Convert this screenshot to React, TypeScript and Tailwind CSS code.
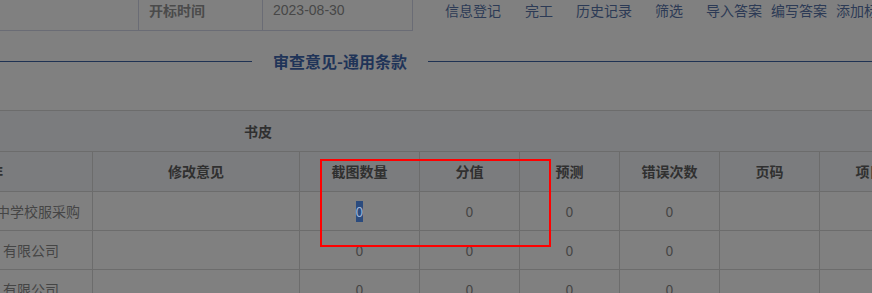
import React from "react";

const cols = [
  { w: "w-[93px]", label: "非", align: "left" },
  { w: "w-[207px]", label: "修改意见" },
  { w: "w-[120px]", label: "截图数量" },
  { w: "w-[100px]", label: "分值" },
  { w: "w-[100px]", label: "预测" },
  { w: "w-[100px]", label: "错误次数" },
  { w: "w-[100px]", label: "页码" },
  { w: "w-[100px]", label: "项目" },
];

const rows = [
  { name: "中学校服采购", off: "ml-[-4px]" },
  { name: "有限公司", off: "ml-[3px]" },
  { name: "有限公司", off: "ml-[3px]" },
];

function FirstCell({ children }: { children: React.ReactNode }) {
  return (
    <div className="w-[93px] shrink-0 h-full border-r border-[#6c6c6c] overflow-hidden flex items-center whitespace-nowrap">
      {children}
    </div>
  );
}

function Cell({ w, children }: { w: string; children?: React.ReactNode }) {
  return (
    <div className={`${w} shrink-0 h-full border-r border-[#6c6c6c] flex items-center justify-center whitespace-nowrap`}>
      {children}
    </div>
  );
}

export default function App() {
  const links: [string, string][] = [
    ["信息登记", "ml-[32px]"],
    ["完工", "ml-[24px]"],
    ["历史记录", "ml-[23px]"],
    ["筛选", "ml-[23px]"],
    ["导入答案", "ml-[23px]"],
    ["编写答案", "ml-[9px]"],
    ["添加标段", "ml-[9px]"],
  ];
  return (
    <div className="w-[872px] h-[293px] overflow-hidden bg-[#808080] relative font-['Noto_Sans_CJK_SC','Microsoft_YaHei',sans-serif] text-[14px]">
      {/* top row */}
      <div className="h-[31px] flex items-start whitespace-nowrap">
        <div className="w-[3px] h-[30px] overflow-hidden">
          <span className="block ml-[-11px] mt-[-4px] leading-[20px] text-[#2b3d5c]">行</span>
        </div>
        <div className="flex h-[31px] border-b border-[#6a6c75]">
          <div className="w-[139px] h-full border-r border-[#6a6c75]" />
          <div className="w-[124px] h-full border-r border-[#6a6c75] pl-[10px] leading-[20px] font-bold text-[#4b4b4b]">
            开标时间
          </div>
          <div className="w-[150px] h-full border-r border-[#6a6c75] pl-[10px] leading-[20px] text-[#474747] font-['Liberation_Sans','Noto_Sans_CJK_SC',sans-serif]">
            2023-08-30
          </div>
        </div>
        {links.map(([t, m]) => (
          <span key={t} className={`${m} leading-[20px] text-[#2c3a55]`}>
            {t}
          </span>
        ))}
      </div>

      {/* title */}
      <div className="h-[79px] pt-[20px]">
        <div className="flex items-center h-[21px]">
          <div className="w-[252px] h-px bg-[#1f3253]" />
          <div className="ml-[21px] text-[16px] leading-[21px] font-bold text-[#1f3458] whitespace-nowrap">
            审查意见-通用条款
          </div>
          <div className="ml-[21px] flex-1 h-px bg-[#1f3253]" />
        </div>
      </div>

      {/* 书皮 row */}
      <div className="h-[41px] border-t border-[#6c6c6c] bg-[#7b7c7e] flex items-center">
        <span className="pl-[244px] font-bold text-[#303030]">书皮</span>
      </div>

      {/* header row */}
      <div className="h-[40px] border-t border-[#6c6c6c] bg-[#7b7c7e] flex font-bold text-[#303030]">
        <FirstCell>
          <span className="ml-[-11px]">非</span>
        </FirstCell>
        {cols.slice(1).map((c) => (
          <Cell key={c.label} w={c.w}>
            {c.label}
          </Cell>
        ))}
      </div>

      {rows.map((r, i) => (
        <div key={i} className="h-[39px] border-t border-[#6c6c6c] flex text-[#454545]">
          <FirstCell>
            <span className={r.off}>{r.name}</span>
          </FirstCell>
          <Cell w="w-[207px]" />
          <Cell w="w-[120px]">
            {i === 0 ? (
              <span className="bg-[#2b4b7e] text-[#9fb3d4] leading-[21px] inline-block">0</span>
            ) : (
              "0"
            )}
          </Cell>
          <Cell w="w-[100px]">0</Cell>
          <Cell w="w-[100px]">0</Cell>
          <Cell w="w-[100px]">0</Cell>
          <Cell w="w-[100px]" />
          <Cell w="w-[100px]" />
        </div>
      ))}

      {/* red annotation box */}
      <div className="absolute left-[320px] top-[159px] w-[231px] h-[88px] border-2 border-[#ff0000]" />
    </div>
  );
}
